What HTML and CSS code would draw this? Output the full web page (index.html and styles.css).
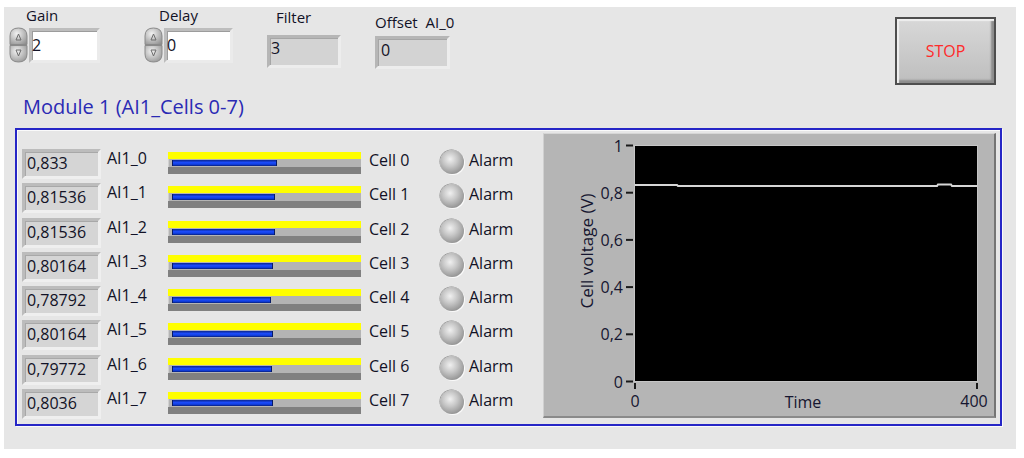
FILE: index.html
```html
<!DOCTYPE html>
<html>
<head>
<meta charset="utf-8">
<link rel="stylesheet" href="styles.css">
</head>
<body>
<div class="panel">
  <div class="controls">
    <div class="ctl ctl-gain">
      <div class="lbl">Gain</div>
      <div class="ctl-row">
        <svg class="spin" viewBox="0 0 21 36"><defs><radialGradient id="sg1" cx="0.4" cy="0.35" r="0.8"><stop offset="0" stop-color="#f2f2f2"/><stop offset="1" stop-color="#8e8e8e"/></radialGradient></defs><path d="M2 17.5 L2 9 Q2 1 10.5 1 Q19 1 19 9 L19 17.5 Z" fill="url(#sg1)" stroke="#8a8a8a"/><path d="M2 18.5 L19 18.5 L19 27 Q19 35 10.5 35 Q2 35 2 27 Z" fill="url(#sg1)" stroke="#8a8a8a"/><path d="M8 13 L10.5 7 L13 13 Z" fill="none" stroke="#6c6c6c"/><path d="M8 23 L10.5 29 L13 23 Z" fill="none" stroke="#6c6c6c"/></svg>
        <div class="input">2</div>
      </div>
    </div>
    <div class="ctl ctl-delay">
      <div class="lbl">Delay</div>
      <div class="ctl-row">
        <svg class="spin" viewBox="0 0 21 36"><defs><radialGradient id="sg2" cx="0.4" cy="0.35" r="0.8"><stop offset="0" stop-color="#f2f2f2"/><stop offset="1" stop-color="#8e8e8e"/></radialGradient></defs><path d="M2 17.5 L2 9 Q2 1 10.5 1 Q19 1 19 9 L19 17.5 Z" fill="url(#sg2)" stroke="#8a8a8a"/><path d="M2 18.5 L19 18.5 L19 27 Q19 35 10.5 35 Q2 35 2 27 Z" fill="url(#sg2)" stroke="#8a8a8a"/><path d="M8 13 L10.5 7 L13 13 Z" fill="none" stroke="#6c6c6c"/><path d="M8 23 L10.5 29 L13 23 Z" fill="none" stroke="#6c6c6c"/></svg>
        <div class="input input-delay">0</div>
      </div>
    </div>
    <div class="ctl ctl-filter">
      <div class="lbl">Filter</div>
      <div class="ind">3</div>
    </div>
    <div class="ctl ctl-offset">
      <div class="lbl">Offset&nbsp; AI_0</div>
      <div class="ind ind-offset">0</div>
    </div>
    <button class="stop">STOP</button>
  </div>

  <div class="title">Module 1 (AI1_Cells 0-7)</div>

  <div class="module">
    <div class="rows">
      <div class="row"><div class="num">0,833</div><div class="ai">AI1_0</div><div class="bar"><div class="bar-y"></div><div class="bar-track"><div class="bar-fill" style="width:105px"></div></div><div class="bar-base"></div></div><div class="cell">Cell 0</div><div class="led"></div><div class="alarm">Alarm</div></div>
      <div class="row"><div class="num">0,81536</div><div class="ai">AI1_1</div><div class="bar"><div class="bar-y"></div><div class="bar-track"><div class="bar-fill" style="width:103px"></div></div><div class="bar-base"></div></div><div class="cell">Cell 1</div><div class="led"></div><div class="alarm">Alarm</div></div>
      <div class="row"><div class="num">0,81536</div><div class="ai">AI1_2</div><div class="bar"><div class="bar-y"></div><div class="bar-track"><div class="bar-fill" style="width:103px"></div></div><div class="bar-base"></div></div><div class="cell">Cell 2</div><div class="led"></div><div class="alarm">Alarm</div></div>
      <div class="row"><div class="num">0,80164</div><div class="ai">AI1_3</div><div class="bar"><div class="bar-y"></div><div class="bar-track"><div class="bar-fill" style="width:101px"></div></div><div class="bar-base"></div></div><div class="cell">Cell 3</div><div class="led"></div><div class="alarm">Alarm</div></div>
      <div class="row"><div class="num">0,78792</div><div class="ai">AI1_4</div><div class="bar"><div class="bar-y"></div><div class="bar-track"><div class="bar-fill" style="width:99px"></div></div><div class="bar-base"></div></div><div class="cell">Cell 4</div><div class="led"></div><div class="alarm">Alarm</div></div>
      <div class="row"><div class="num">0,80164</div><div class="ai">AI1_5</div><div class="bar"><div class="bar-y"></div><div class="bar-track"><div class="bar-fill" style="width:101px"></div></div><div class="bar-base"></div></div><div class="cell">Cell 5</div><div class="led"></div><div class="alarm">Alarm</div></div>
      <div class="row"><div class="num">0,79772</div><div class="ai">AI1_6</div><div class="bar"><div class="bar-y"></div><div class="bar-track"><div class="bar-fill" style="width:100px"></div></div><div class="bar-base"></div></div><div class="cell">Cell 6</div><div class="led"></div><div class="alarm">Alarm</div></div>
      <div class="row"><div class="num">0,8036</div><div class="ai">AI1_7</div><div class="bar"><div class="bar-y"></div><div class="bar-track"><div class="bar-fill" style="width:101px"></div></div><div class="bar-base"></div></div><div class="cell">Cell 7</div><div class="led"></div><div class="alarm">Alarm</div></div>
    </div>

    <div class="graph">
      <svg class="chart" width="450" height="282" viewBox="0 0 450 282">
        <rect x="90.5" y="11.5" width="343" height="236" fill="#000" stroke="#c6c6c6" stroke-width="1"/>
        <polyline points="91,51 133,51 134,52 393,52 394,50.5 407,50.5 408,52 433,52" fill="none" stroke="#d6d6d6" stroke-width="2"/>
        <g stroke="#1a1a1a" stroke-width="2">
          <line x1="82" y1="11.5" x2="89" y2="11.5"/>
          <line x1="82" y1="58.7" x2="89" y2="58.7"/>
          <line x1="82" y1="105.9" x2="89" y2="105.9"/>
          <line x1="82" y1="153.1" x2="89" y2="153.1"/>
          <line x1="82" y1="200.3" x2="89" y2="200.3"/>
          <line x1="82" y1="247.5" x2="89" y2="247.5"/>
          <line x1="91" y1="249" x2="91" y2="255"/>
          <line x1="433" y1="249" x2="433" y2="255"/>
        </g>
        <g class="tick-lbl" text-anchor="end">
          <text x="79" y="17.5">1</text>
          <text x="79" y="64.7">0,8</text>
          <text x="79" y="111.9">0,6</text>
          <text x="79" y="159.1">0,4</text>
          <text x="79" y="206.3">0,2</text>
          <text x="79" y="253.5">0</text>
        </g>
        <g class="tick-lbl" text-anchor="middle">
          <text x="91" y="273">0</text>
          <text x="259" y="274">Time</text>
          <text x="430" y="273">400</text>
        </g>
        <text class="tick-lbl axis-title" text-anchor="middle" transform="translate(49,117) rotate(-90)">Cell voltage (V)</text>
      </svg>
    </div>
  </div>
</div>
</body>
</html>
```
FILE: styles.css
```css
* { box-sizing: border-box; }

body {
  margin: 0;
  background: #ffffff;
  font-family: "Open Sans", "Noto Sans", sans-serif;
  color: #121226;
}

.panel {
  margin: 7px 0 0 4px;
  width: 1012px;
  height: 442px;
  background: #e6e6e6;
}

/* ---------- top controls ---------- */
.controls {
  display: flex;
  align-items: flex-start;
  height: 88px;
}

.lbl {
  font-size: 15px;
  line-height: 18px;
  height: 18px;
  white-space: nowrap;
}

.ctl-row {
  display: flex;
  align-items: flex-start;
  margin-top: 2px;
}

.spin {
  display: block;
  width: 21px;
  height: 36px;
}

.ctl-gain .lbl,
.ctl-delay .lbl {
  line-height: 20px;
  height: 20px;
}

.ctl-gain { margin-left: 4px; margin-top: -2px; }
.ctl-gain .lbl { padding-left: 18px; }

.ctl-delay { margin-left: 43px; margin-top: -2px; }
.ctl-delay .lbl { padding-left: 16px; }

.input {
  margin-top: 1px;
  width: 71px;
  height: 35px;
  border: 3px solid;
  border-color: #bdbdbd #ebebeb #ebebeb #bdbdbd;
  background: #ffffff;
  box-shadow: inset 1px 1px 0 #9c9c9c;
  font-size: 16px;
  line-height: 20px;
  padding: 4px 0 0 0;
}
.input-delay { width: 69px; }

.ctl-filter { margin-left: 34px; margin-top: 1px; }
.ctl-filter .lbl { padding-left: 9px; }

.ctl-offset { margin-left: 34px; margin-top: 6px; }

.ind {
  margin-top: 9px;
  width: 74px;
  height: 33px;
  border: 3px solid;
  border-color: #b6b6b6 #ededed #ededed #b6b6b6;
  background: #d3d3d3;
  box-shadow: inset 1px 1px 0 #a6a6a6;
  font-size: 16px;
  line-height: 20px;
  padding: 0 0 0 1px;
}
.ind-offset {
  margin-top: 5px;
  width: 75px;
  padding: 1px 0 0 3px;
}

.stop {
  margin-left: auto;
  margin-right: 20px;
  margin-top: 10px;
  width: 101px;
  height: 68px;
  border: 2px solid #4e4e4e;
  background: linear-gradient(#d8d8d8, #bebebe);
  box-shadow: inset 2px 2px 1px #f0f0f0, inset -3px -3px 2px #8c8c8c;
  color: #ff2a2a;
  font-family: "Open Sans", "Noto Sans", sans-serif;
  font-size: 16px;
  padding: 0;
}

/* ---------- module ---------- */
.title {
  height: 24px;
  font-size: 20px;
  line-height: 24px;
  color: #2a2ab4;
  padding-left: 19px;
}

.module {
  margin: 9px 0 0 11px;
  width: 987px;
  height: 298px;
  border: 2px solid #2626c6;
  box-shadow: inset 1px 1px 0 #fafafa, 1px 1px 0 #fafafa;
  display: flex;
  align-items: flex-start;
}

.rows {
  width: 526px;
  padding: 17px 0 0 5px;
}

.row {
  display: flex;
  align-items: flex-start;
  height: 34.3px;
  font-size: 16px;
  line-height: 20px;
  white-space: nowrap;
}

.num {
  margin-top: 2px;
  width: 79px;
  height: 30px;
  border: 3px solid;
  border-color: #bcbcbc #efefef #efefef #bcbcbc;
  background: #d5d5d5;
  box-shadow: inset 1px 1px 0 #a8a8a8;
  padding: 1px 0 0 2px;
}

.ai {
  margin: 1px 0 0 6px;
  width: 61px;
}

.bar {
  margin-top: 5px;
  width: 193px;
  height: 22px;
  display: flex;
  flex-direction: column;
}
.bar-y { height: 7px; background: #ffff00; }
.bar-track {
  height: 8px;
  background: #b4b4b4;
  padding: 1px 0 1px 4px;
  box-shadow: inset 1px 0 0 #d0d0d0;
}
.bar-fill {
  height: 6px;
  background: linear-gradient(#0b2690, #1c4dff 45%, #0f3bd6 75%, #071f7a);
  box-shadow: inset -1px 0 0 #061a66, inset 1px 0 0 #061a66;
}
.bar-base { height: 7px; background: #808080; }

.cell {
  margin: 3px 0 0 8px;
  width: 71px;
}

.led {
  margin-top: 3px;
  width: 24px;
  height: 24px;
  border-radius: 50%;
  background: radial-gradient(circle at 42% 38%, #f0f0f0 0, #c8c8c8 35%, #949494 75%, #7c7c7c 100%);
  box-shadow: 1px 1px 0 #fafafa, -0.5px -0.5px 0 #8a8a8a;
}

.alarm {
  margin: 3px 0 0 5px;
}

/* ---------- graph ---------- */
.graph {
  margin-top: 3px;
  width: 453px;
  height: 285px;
  background: #b5b5b5;
  border-top: 1px solid #d6d6d6;
  border-left: 1px solid #d0d0d0;
  border-right: 2px solid #747474;
  border-bottom: 2px solid #8a8a8a;
}

.chart { display: block; }

.tick-lbl {
  font-family: "Open Sans", "Noto Sans", sans-serif;
  font-size: 16px;
  fill: #161630;
}

.axis-title { font-size: 17px; }
```
